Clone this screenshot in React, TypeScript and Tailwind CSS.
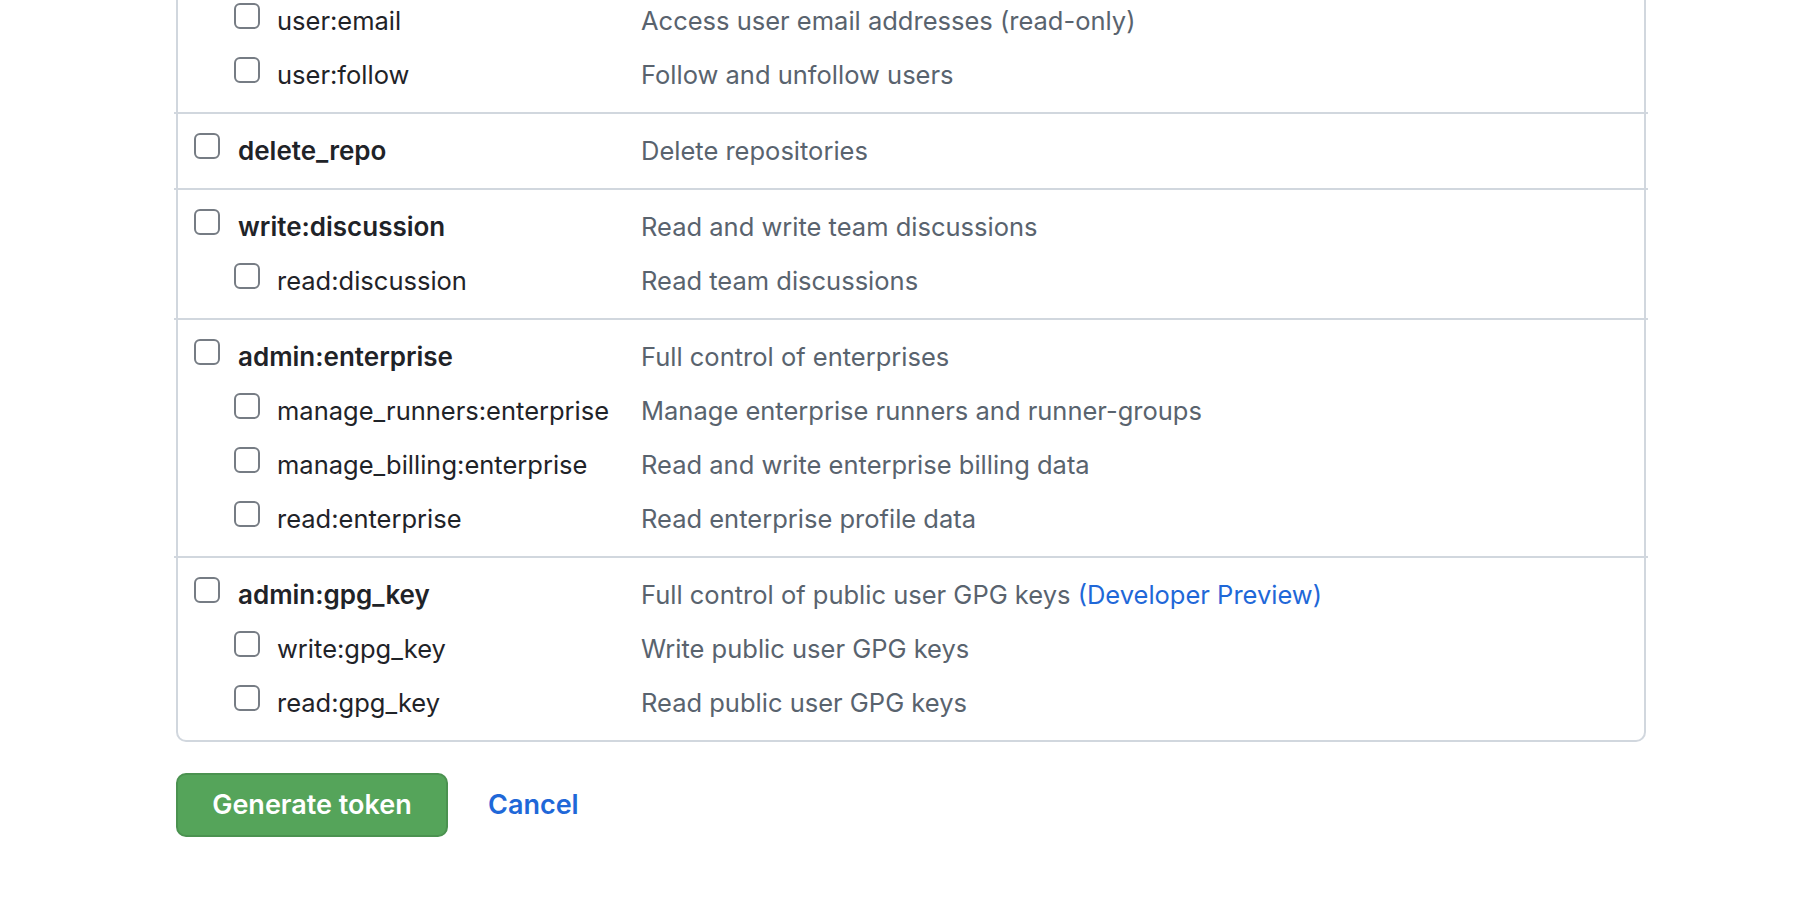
import React from 'react';

type Scope = {
  name: string;
  desc: string;
  link?: string;
  sub?: boolean;
};

const groups: Scope[][] = [
  [
    { name: 'user:email', desc: 'Access user email addresses (read-only)', sub: true },
    { name: 'user:follow', desc: 'Follow and unfollow users', sub: true },
  ],
  [{ name: 'delete_repo', desc: 'Delete repositories' }],
  [
    { name: 'write:discussion', desc: 'Read and write team discussions' },
    { name: 'read:discussion', desc: 'Read team discussions', sub: true },
  ],
  [
    { name: 'admin:enterprise', desc: 'Full control of enterprises' },
    { name: 'manage_runners:enterprise', desc: 'Manage enterprise runners and runner-groups', sub: true },
    { name: 'manage_billing:enterprise', desc: 'Read and write enterprise billing data', sub: true },
    { name: 'read:enterprise', desc: 'Read enterprise profile data', sub: true },
  ],
  [
    { name: 'admin:gpg_key', desc: 'Full control of public user GPG keys', link: '(Developer Preview)' },
    { name: 'write:gpg_key', desc: 'Write public user GPG keys', sub: true },
    { name: 'read:gpg_key', desc: 'Read public user GPG keys', sub: true },
  ],
];

const Checkbox = () => (
  <span className="mt-[9px] block h-[26px] w-[26px] shrink-0 rounded-[6px] border-2 border-[#767c84] bg-white" />
);

const Row = ({ s }: { s: Scope }) => (
  <div className="flex h-[54px] items-start">
    <div className={`flex w-[447px] shrink-0 items-start ${s.sub ? 'pl-[40px] gap-[17px]' : 'gap-[18px]'}`}>
      <Checkbox />
      <span
        className={`whitespace-nowrap leading-[54px] text-[#1f2328] ${s.sub ? 'text-[25.5px] font-normal' : 'text-[26px] font-semibold'}`}
      >
        {s.name}
      </span>
    </div>
    <div className="whitespace-nowrap leading-[54px] text-[25.5px] text-[#59636e]">
      {s.desc}
      {s.link && <span className="text-[#1f68d8]"> {s.link}</span>}
    </div>
  </div>
);

export default function App() {
  return (
    <div
      className="h-[906px] w-full overflow-hidden bg-white"
      style={{ fontFamily: 'Inter, "Noto Sans", sans-serif' }}
    >
      <div className="ml-[176px] w-[1470px]">
        <div className="-mt-[16px] rounded-b-[10px] border-2 border-t-0 border-[#d1d7de]">
          {groups.map((rows, i) => (
            <div key={i}>
              {i > 0 && <div className="-mx-[4px] h-[2px] bg-[#d1d7de]" />}
              <div className="py-[10px] pl-[16px]">
                {rows.map((s) => (
                  <Row key={s.name} s={s} />
                ))}
              </div>
            </div>
          ))}
        </div>
        <div className="mt-[31px] flex items-center gap-[40px]">
          <button className="h-[64px] w-[272px] rounded-[10px] border-2 border-[#4b9250] bg-[#55a45a] text-[27px] font-semibold text-white">
            Generate token
          </button>
          <a className="text-[27px] font-semibold text-[#1f68d8]">Cancel</a>
        </div>
      </div>
    </div>
  );
}
